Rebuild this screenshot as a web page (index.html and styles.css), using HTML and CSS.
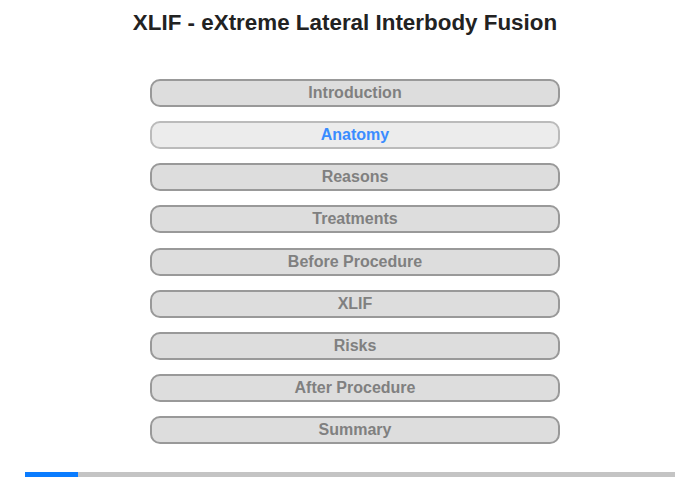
FILE: index.html
```html
<!DOCTYPE html>
<html lang="en">
<head>
  <meta charset="UTF-8" />
  <title>XLIF - eXtreme Lateral Interbody Fusion</title>
  <link rel="stylesheet" href="styles.css">
</head>
<body>
  <div class="page">
    <h1 class="title">XLIF - eXtreme Lateral Interbody Fusion</h1>

    <!-- menu des chapitres -->
    <nav class="chapters">
      <button class="chapter">Introduction</button>
      <button class="chapter active">Anatomy</button>
      <button class="chapter">Reasons</button>
      <button class="chapter">Treatments</button>
      <button class="chapter">Before Procedure</button>
      <button class="chapter">XLIF</button>
      <button class="chapter">Risks</button>
      <button class="chapter">After Procedure</button>
      <button class="chapter">Summary</button>
    </nav>

    <!-- barre de progression -->
    <div class="progress">
      <div class="progress-fill" style="width: 53px;"></div>
    </div>
  </div>
</body>
</html>
```

FILE: styles.css
```css
html, body {
  margin: 0;
  padding: 0;
  background: #ffffff;
  font-family: "Liberation Sans", Arial, sans-serif;
}

.page {
  width: 700px;
  height: 480px;
  display: flex;
  flex-direction: column;
}

.title {
  margin: 0;
  padding-top: 10px;
  height: 79px;
  box-sizing: border-box;
  font-size: 22.4px;
  font-weight: bold;
  line-height: 26px;
  color: #222222;
  text-align: center;
  padding-right: 10px;
}

.chapters {
  display: flex;
  flex-direction: column;
  gap: 14.15px;
  width: 410px;
  margin-left: 150px;
}

.chapter {
  height: 28px;
  margin: 0;
  padding: 0;
  border: 2px solid #999999;
  border-radius: 10px;
  background: #dddddd;
  color: #808080;
  font-family: "Liberation Sans", Arial, sans-serif;
  font-size: 16px;
  font-weight: bold;
  cursor: pointer;
}

.chapter.active {
  border-color: #bbbbbb;
  background: #ececec;
  color: #3a8cff;
}

.progress {
  margin: 28px 25px 0 25px;
  height: 5px;
  background: #c4c4c4;
}

.progress-fill {
  height: 100%;
  background: #0a7cff;
}
```
